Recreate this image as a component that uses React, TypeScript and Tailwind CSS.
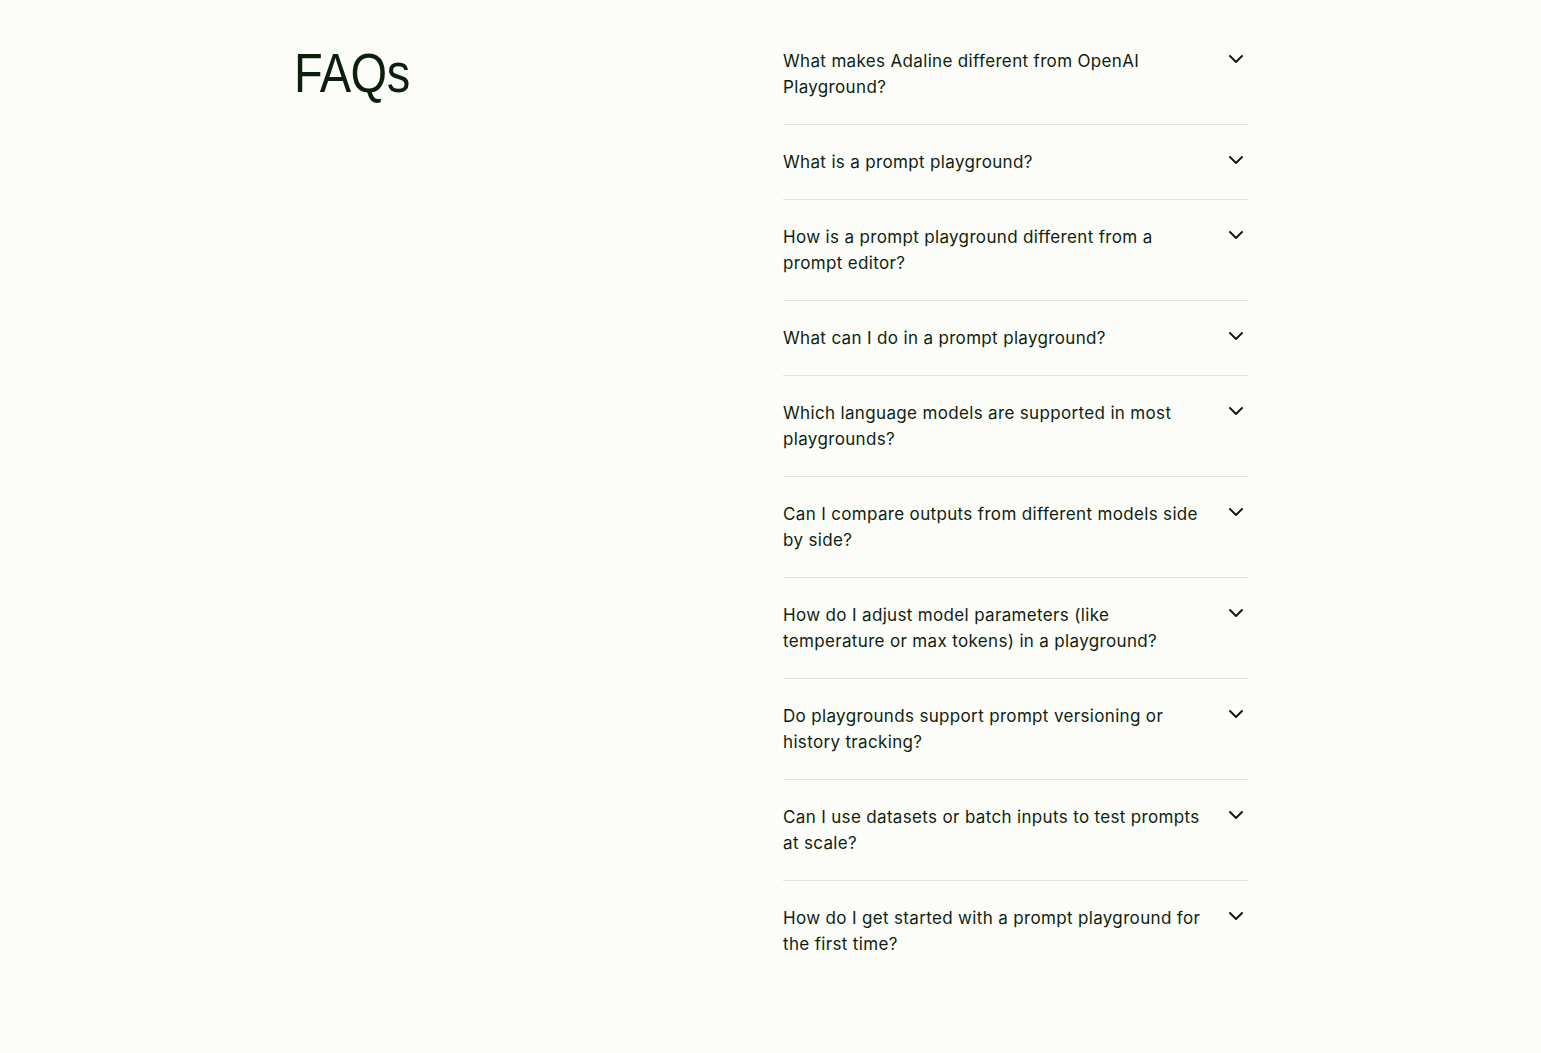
import { ChevronDown } from "lucide-react";

const questions = [
  "What makes Adaline different from OpenAI Playground?",
  "What is a prompt playground?",
  "How is a prompt playground different from a prompt editor?",
  "What can I do in a prompt playground?",
  "Which language models are supported in most playgrounds?",
  "Can I compare outputs from different models side by side?",
  "How do I adjust model parameters (like temperature or max tokens) in a playground?",
  "Do playgrounds support prompt versioning or history tracking?",
  "Can I use datasets or batch inputs to test prompts at scale?",
  "How do I get started with a prompt playground for the first time?",
];

const App = () => {
  return (
    <main className="min-h-screen bg-[#fcfdf8] text-[#0f1d10] font-['Inter','Liberation_Sans',sans-serif]">
      <section className="w-[955px] mx-auto pt-6 grid grid-cols-[1fr_465px] gap-[26px]">
        <div>
          {/* heading face is a condensed grotesk, so squeeze Arial a bit */}
          <h2 className="inline-block mt-[21px] ml-px origin-left scale-x-[0.84] font-['Liberation_Sans',Arial,sans-serif] text-[56px] leading-none tracking-[-0.01em] text-[#0c1f0c]">
            FAQs
          </h2>
        </div>

        <ul role="list" className="flex flex-col">
          {questions.map((q, i) => (
            <li
              key={q}
              className={`flex items-start justify-between gap-4 py-6 ${
                i < questions.length - 1 ? "border-b border-[#e3e5db]" : ""
              }`}
            >
              <span className="max-w-[428px] text-[17px] leading-[26px] tracking-[0.02em]">{q}</span>
              <ChevronDown className="shrink-0 -mt-px" size={24} strokeWidth={2} />
            </li>
          ))}
        </ul>
      </section>
    </main>
  );
};

export default App;
